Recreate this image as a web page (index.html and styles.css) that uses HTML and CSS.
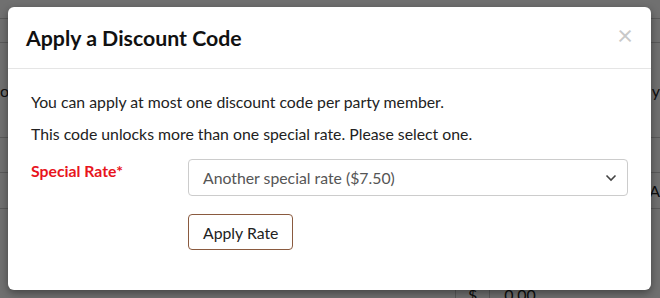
FILE: index.html
```html
<!DOCTYPE html>
<html lang="en">
<head>
    <meta charset="UTF-8">
    <title>Apply a Discount Code</title>
    <link rel="stylesheet" href="styles.css">
</head>
<body>
    <!-- Page behind the modal -->
    <div class="page">
        <div class="page-row row-1"></div>
        <div class="page-row row-2"></div>
        <div class="page-row row-3">
            <span>or</span>
            <span>l y</span>
        </div>
        <div class="page-row row-4"></div>
        <div class="page-row row-5">
            <span></span>
            <span>A</span>
        </div>
        <div class="page-total">
            <span class="cell">$</span>
            <span class="cell cell-amt">0.00</span>
        </div>
    </div>

    <div class="backdrop"></div>

    <!-- Modal -->
    <div class="modal">
        <div class="modal-header">
            <h4 class="modal-title">Apply a Discount Code</h4>
            <span class="close">&times;</span>
        </div>
        <div class="modal-body">
            <p>You can apply at most one discount code per party member.</p>
            <p>This code unlocks more than one special rate. Please select one.</p>
            <div class="form-row">
                <label class="form-label">Special Rate*</label>
                <div class="form-field">
                    <div class="select">
                        <span>Another special rate ($7.50)</span>
                        <svg class="chevron" width="12" height="8" viewBox="0 0 12 8">
                            <path d="M1.5 1.5 L6 6 L10.5 1.5" fill="none" stroke="#444" stroke-width="1.6"/>
                        </svg>
                    </div>
                    <button class="btn">Apply Rate</button>
                </div>
            </div>
        </div>
    </div>
</body>
</html>
```
FILE: styles.css
```css
body {
    margin: 0;
    font-family: Lato, "Open Sans", sans-serif;
    background-color: #ffffff;
    width: 660px;
    height: 298px;
    overflow: hidden;
    position: relative;
}

.page {
    color: #222;
    font-size: 16px;
}

.page-row {
    border-bottom: 1px solid #ccc;
    display: flex;
    justify-content: space-between;
    align-items: center;
    box-sizing: border-box;
}

.row-1 { height: 19px; }
.row-2 { height: 24px; }
.row-3 { height: 95px; }
.row-4 { height: 35px; }
.row-5 { height: 36px; }

.page-total {
    display: flex;
    margin-left: 455px;
    margin-top: 76px;
    line-height: 20px;
}

.cell {
    border-left: 1px solid #ccc;
    padding: 0 12px;
}

.cell-amt {
    padding-left: 14px;
}

.backdrop {
    position: absolute;
    inset: 0;
    background-color: rgba(0, 0, 0, 0.56);
}

.modal {
    position: absolute;
    left: 8px;
    top: 7px;
    width: 643px;
    height: 283px;
    background-color: #fff;
    border-radius: 6px;
    box-shadow: 0 3px 8px rgba(0, 0, 0, 0.4);
    color: #222;
}

.modal-header {
    display: flex;
    justify-content: space-between;
    align-items: center;
    height: 62px;
    padding: 0 18px;
    border-bottom: 1px solid #e5e5e5;
    box-sizing: border-box;
}

.modal-title {
    margin: 0;
    font-size: 21.3px;
    font-weight: bold;
    color: #111;
}

.close {
    font-size: 27px;
    color: #c8c8c8;
    line-height: 1;
    margin-top: -6px;
}

.modal-body {
    padding: 22px 23px;
    font-size: 15.8px;
}

.modal-body p {
    margin: 0 0 10px;
    line-height: 22px;
}

.form-row {
    display: flex;
    margin-top: 14px;
}

.form-label {
    width: 157px;
    color: #e8141c;
    font-weight: bold;
    padding-top: 2px;
}

.form-field {
    flex: 1;
}

.select {
    display: flex;
    justify-content: space-between;
    align-items: center;
    height: 37px;
    box-sizing: border-box;
    border: 1px solid #ccc;
    border-radius: 4px;
    padding: 0 10px 0 14px;
    color: #555;
}

.btn {
    margin-top: 18px;
    height: 36px;
    padding: 0 14px;
    font-family: inherit;
    font-size: 15.8px;
    color: #222;
    background-color: #fff;
    border: 1px solid #8a5a3f;
    border-radius: 4px;
}
```
